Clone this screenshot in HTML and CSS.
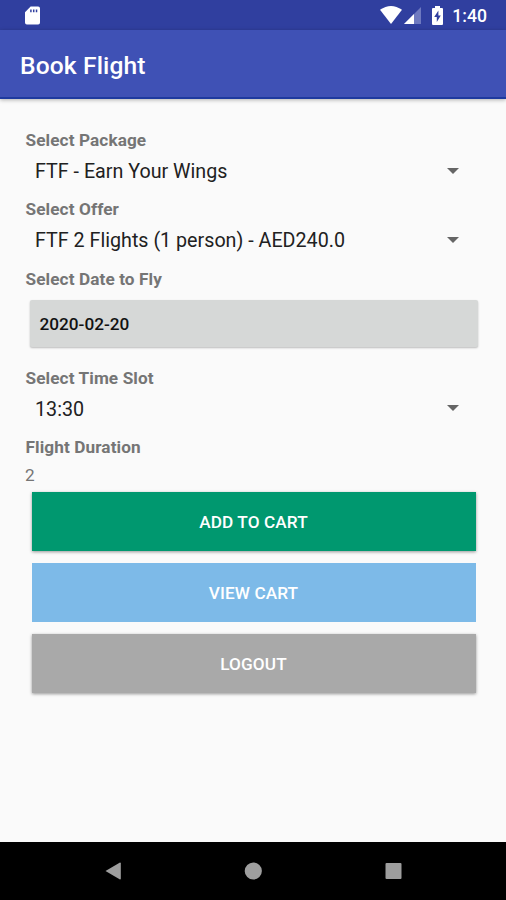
FILE: index.html
```html
<!DOCTYPE html>
<html lang="en">
<head>
<meta charset="utf-8">
<title>Book Flight</title>
<link rel="stylesheet" href="styles.css">
</head>
<body>
<div class="screen">
  <div class="status">
    <svg class="sd" width="15" height="19" viewBox="0 0 16 19"><path fill="#fff" fill-rule="evenodd" d="M6 0h8q2 0 2 2v15q0 2-2 2H2q-2 0-2-2V6zM5.5 3v3h1.6V3zm3 0v3h1.6V3zm3 0v3h1.6V3z"/></svg>
    <svg class="wifi" width="22" height="18" viewBox="0 0 22 18"><path fill="#fff" d="M0 3.8Q11-3.8 22 3.8L11 18z"/></svg>
    <svg class="signal" width="17" height="17" viewBox="0 0 17 17"><path fill="#6e79c0" d="M17 0v17H0z"/><path fill="#fff" d="M10 7v10H0z"/></svg>
    <svg class="battery" width="11" height="19" viewBox="0 0 11 19"><path fill="#fff" d="M3 0h5v2h2q1 0 1 1v15q0 1-1 1H1q-1 0-1-1V3q0-1 1-1h2z"/><path fill="#303f9f" d="M6.4 4.5L2.2 11h2.6v5L8.8 9.500H6.400z"/></svg>
    <span class="clock">1:40</span>
  </div>
  <header class="bar"><h1 class="title">Book Flight</h1></header>
  <main class="form">
    <div class="field">
      <div class="label">Select Package</div>
      <div class="spinner"><span>FTF - Earn Your Wings</span><svg class="caret" width="12" height="6" viewBox="0 0 12 6"><path d="M0 0h12L6 6z"/></svg></div>
    </div>
    <div class="field">
      <div class="label">Select Offer</div>
      <div class="spinner"><span>FTF 2 Flights (1 person) - AED240.0</span><svg class="caret" width="12" height="6" viewBox="0 0 12 6"><path d="M0 0h12L6 6z"/></svg></div>
    </div>
    <div class="field date-field">
      <div class="label">Select Date to Fly</div>
      <div class="date"><span>2020-02-20</span></div>
    </div>
    <div class="field">
      <div class="label">Select Time Slot</div>
      <div class="spinner"><span>13:30</span><svg class="caret" width="12" height="6" viewBox="0 0 12 6"><path d="M0 0h12L6 6z"/></svg></div>
    </div>
    <div class="label">Flight Duration</div>
    <div class="duration">2</div>
    <div class="actions">
      <div class="button add">ADD TO CART</div>
      <div class="button view">VIEW CART</div>
      <div class="button logout">LOGOUT</div>
    </div>
  </main>
  <nav class="nav">
    <svg width="18" height="18" viewBox="0 0 18 18"><path d="M1.500 9L16 .5q.8 0 .8.800v15.400q0 .8-.8.800z"/></svg>
    <svg width="18" height="18" viewBox="0 0 18 18"><circle cx="9.300" cy="9" r="8.600"/></svg>
    <svg width="18" height="18" viewBox="0 0 18 18"><rect x="1.500" y="1" width="16" height="16" rx="1"/></svg>
  </nav>
</div>
</body>
</html>
```
FILE: styles.css
```css
body {
  margin: 0;
  font-family: Roboto, "Liberation Sans", sans-serif;
  background: #fafafa;
}

.screen {
  display: flex;
  flex-direction: column;
  width: 506px;
  height: 900px;
  overflow: hidden;
}

.status {
  display: flex;
  align-items: center;
  box-sizing: border-box;
  height: 30px;
  padding: 0 19px 0 25px;
  background: #303f9f;
  color: #fff;
}

.wifi { margin-left: auto; }
.signal { margin-left: 2px; }
.battery { margin: 0 9px 0 11px; }

.clock {
  font-size: 17.6px;
  font-weight: 500;
  line-height: 30px;
  padding-top: 2px;
}

.bar {
  display: flex;
  align-items: center;
  box-sizing: border-box;
  height: 69px;
  padding: 3px 20px 0;
  background: #3f51b5;
  border-bottom: 2px solid #1e3a9f;
  box-shadow: 0 1px 4px rgba(0, 0, 0, .3);
}

.title {
  margin: 0;
  font-size: 24.6px;
  font-weight: 500;
  letter-spacing: .12px;
  color: #fff;
}

.form {
  flex: 1;
  padding: 30px 25px 0;
}

.field { height: 69.4px; }
.date-field { height: 99px; }

.label {
  height: 23px;
  padding-left: .5px;
  font-size: 17.2px;
  font-weight: 700;
  letter-spacing: .1px;
  line-height: 23px;
  color: #757575;
}

.spinner {
  display: flex;
  align-items: center;
  justify-content: space-between;
  height: 37px;
  padding: 0 22px 0 10px;
  font-size: 19.7px;
  color: #212121;
}

.spinner span { padding-top: 2px; }

.caret { fill: #656565; }

.date {
  display: flex;
  align-items: center;
  box-sizing: border-box;
  height: 47px;
  margin: 9px 3px 0 4.5px;
  padding: 1px 0 0 10px;
  border-radius: 2px;
  background: #d6d8d7;
  box-shadow: 0 1px 2px rgba(0, 0, 0, .25);
  font-size: 17.2px;
  font-weight: 500;
  color: #111;
}

.duration {
  height: 32.5px;
  font-size: 17.2px;
  line-height: 33px;
  color: #757575;
}

.actions {
  display: flex;
  flex-direction: column;
  gap: 12.4px;
  padding: 0 5.500px 0 6.500px;
}

.button {
  height: 59px;
  font-size: 17.2px;
  font-weight: 500;
  letter-spacing: .1px;
  line-height: 61px;
  text-align: center;
  color: #fff;
}

.add { background: #00986f; box-shadow: 0 1px 3px rgba(0, 0, 0, .4); }
.view { background: #7dbae8; }
.logout { background: #a9a9a9; box-shadow: 0 1px 3px rgba(0, 0, 0, .4); }

.nav {
  display: flex;
  align-items: center;
  justify-content: center;
  gap: 122px;
  box-sizing: border-box;
  height: 58px;
  background: #000;
  fill: #9e9e9e;
}
```
